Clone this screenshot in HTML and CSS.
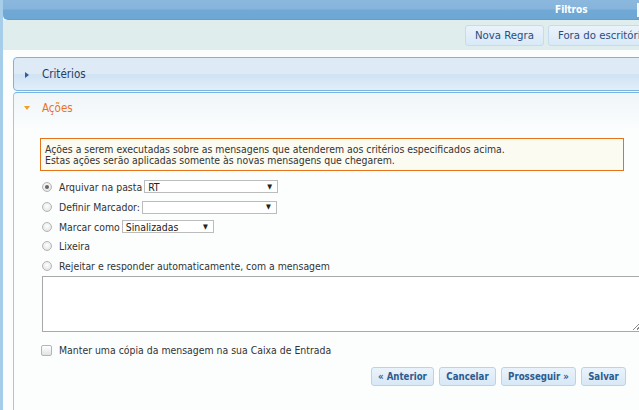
FILE: index.html
```html
<!DOCTYPE html>
<html lang="pt">
<head>
<meta charset="utf-8">
<title>Filtros</title>
<link rel="stylesheet" href="styles.css">
</head>
<body>
<div class="app">
  <div class="header">
    <span class="title">Filtros</span>
    <span class="header-stub"></span>
  </div>
  <div class="toolbar">
    <button class="tbtn">Nova Regra</button>
    <button class="tbtn">Fora do escritório</button>
  </div>
  <div class="content">
    <div class="panel criterios">
      <span class="tri tri-right"></span>
      <span class="ptitle">Critérios</span>
    </div>
    <div class="panel acoes">
      <div class="acoes-head">
        <span class="tri tri-down"></span>
        <span class="ptitle orange">Ações</span>
      </div>
      <div class="acoes-body">
        <div class="info">Ações a serem executadas sobre as mensagens que atenderem aos critérios especificados acima.<br>Estas ações serão aplicadas somente às novas mensagens que chegarem.</div>
        <div class="opts">
          <label class="opt r1"><span class="radio checked"></span><span class="lbl">Arquivar na pasta</span><span class="sel w133"><span class="val">RT</span><span class="arr">▼</span></span></label>
          <label class="opt r2"><span class="radio"></span><span class="lbl">Definir Marcador:</span><span class="sel w134"><span class="val"></span><span class="arr">▼</span></span></label>
          <label class="opt r3"><span class="radio"></span><span class="lbl">Marcar como</span><span class="sel w91"><span class="val">Sinalizadas</span><span class="arr">▼</span></span></label>
          <label class="opt r4"><span class="radio"></span><span class="lbl">Lixeira</span></label>
          <label class="opt r5"><span class="radio"></span><span class="lbl">Rejeitar e responder automaticamente, com a mensagem</span></label>
        </div>
        <div class="ta"><span class="grip"></span></div>
        <label class="chk"><span class="box"></span><span class="lbl">Manter uma cópia da mensagem na sua Caixa de Entrada</span></label>
        <div class="actions">
          <button class="abtn b-ant">« Anterior</button>
          <button class="abtn b-can">Cancelar</button>
          <button class="abtn b-pro">Prosseguir »</button>
          <button class="abtn b-sal">Salvar</button>
        </div>
      </div>
    </div>
  </div>
</div>
</body>
</html>
```
FILE: styles.css
```css
html, body {
  margin: 0;
  padding: 0;
  width: 639px;
  height: 410px;
  overflow: hidden;
  background: #fcfefe;
  font-family: "DejaVu Sans Condensed", "DejaVu Sans", sans-serif;
  font-size: 10.4px;
  color: #333;
}
.app {
  border-left: 3px solid #a6cde9;
  height: 410px;
  box-sizing: border-box;
  width: 680px;
}
.header {
  height: 20px;
  box-sizing: border-box;
  background: linear-gradient(to bottom, #8cb8de 0%, #86b4db 45%, #70a8d6 55%, #6ea6d4 100%);
  border-bottom: 1px solid #5d9fd6;
  border-bottom-left-radius: 5px;
  display: flex;
  align-items: center;
  padding-left: 552px;
}
.title {
  color: #fff;
  font-weight: bold;
  font-size: 10px;
  width: 82px;
}
.header-stub {
  width: 6px;
  height: 14px;
  background: #f4f8fc;
}
.toolbar {
  height: 30px;
  background: #e0eded;
  display: flex;
  align-items: center;
  gap: 4px;
  padding-left: 462px;
  box-sizing: border-box;
  padding-top: 1px;
}
.tbtn {
  font-family: inherit;
  font-size: 11.3px;
  color: #2b4d7e;
  height: 21px;
  padding: 0 9px;
  border: 1px solid #c5dbee;
  border-radius: 3px;
  background: linear-gradient(to bottom, #eaf3fb, #d9e9f7);
  white-space: nowrap;
}
.content {
  padding: 7px 0 0 10px;
}
.panel {
  border: 1px solid #79b4e3;
  border-radius: 4px;
  width: 680px;
  box-sizing: border-box;
}
.criterios {
  height: 34px;
  background: linear-gradient(to bottom, #deebf7 0%, #deebf7 48%, #d0e3f4 52%, #e2eef9 100%);
  display: flex;
  align-items: center;
  padding-left: 10px;
  padding-bottom: 1px;
}
.acoes {
  margin-top: 1px;
  border-color: #79b4e3 #79b4e3 #79b4e3 #a9c6dd;
  border-bottom: none;
  border-radius: 4px 4px 0 0;
  background: linear-gradient(to bottom, #f0f5f8 0px, #fcfefe 40px);
  height: 330px;
}
.acoes-head {
  height: 30px;
  display: flex;
  align-items: center;
  padding-left: 10px;
}
.tri {
  width: 0;
  height: 0;
  margin-right: 13px;
}
.tri-right {
  border-top: 3px solid transparent;
  border-bottom: 3px solid transparent;
  border-left: 4px solid #2f5e9a;
  margin-top: 3px;
  margin-left: 1px;
}
.tri-down {
  border-left: 3px solid transparent;
  border-right: 3px solid transparent;
  border-top: 4px solid #f0a028;
  margin-right: 12px;
}
.ptitle {
  font-size: 11.5px;
  color: #243e66;
}
.orange { color: #e8741d; }
.acoes-body {
  padding: 15px 0 0 26px;
}
.info {
  width: 574px;
  border: 1px solid #e4731a;
  background: #fcfbf2;
  padding: 5px 4px 4px 4px;
  line-height: 11px;
  color: #333;
}
.opts {
  margin-top: 5px;
  display: flex;
  flex-direction: column;
}
.opt {
  display: flex;
  align-items: center;
  height: 20px;
}
.r1 { height: 21px; }
.r2 { height: 20px; }
.r3 { height: 19px; }
.r4 { height: 19px; }
.r5 { height: 21px; }
.radio {
  width: 10px;
  height: 10px;
  box-sizing: border-box;
  border-radius: 50%;
  border: 1px solid #b4b4b4;
  background: radial-gradient(circle at 50% 40%, #ffffff, #dcdcdc);
  margin: 0 5px 0 2px;
  position: relative;
}
.radio.checked::after {
  content: "";
  position: absolute;
  left: 2px; top: 2px;
  width: 4px; height: 4px;
  border-radius: 50%;
  background: #666;
}
.lbl { margin-left: 2px; }
.sel {
  margin-left: 2px;
  height: 13px;
  box-sizing: border-box;
  border: 1px solid #bcbcbc;
  background: #fff;
  display: flex;
  align-items: center;
  justify-content: space-between;
  padding: 0 5px 0 3px;
  color: #222;
}
.arr { font-size: 7px; color: #222; }
.w133 { width: 134px; }
.w134 { width: 135px; }
.w91 { width: 92px; }
.ta {
  margin-top: 0px;
  margin-left: 2px;
  width: 610px;
  height: 56px;
  box-sizing: border-box;
  border: 1px solid #a8a8a8;
  background: #fff;
  position: relative;
}
.grip {
  position: absolute;
  right: 12px;
  bottom: 1px;
  width: 6px;
  height: 6px;
  background: linear-gradient(135deg, transparent 45%, #888 45%, #888 55%, transparent 55%, transparent 75%, #888 75%, #888 85%, transparent 85%);
}
.chk {
  display: flex;
  align-items: center;
  margin-top: 11px;
  height: 14px;
}
.box {
  width: 9px;
  height: 9px;
  border: 1px solid #b4b4b4;
  border-radius: 2px;
  background: linear-gradient(#fff, #e2e2e2);
  margin-left: 1px;
  margin-right: 5px;
}
.actions {
  display: flex;
  gap: 5px;
  margin-top: 10px;
  padding-left: 331px;
}
.abtn {
  font-family: inherit;
  font-size: 9.6px;
  font-weight: bold;
  color: #2e5b8e;
  height: 19px;
  padding: 0;
  border: 1px solid #b9d3ec;
  border-radius: 3px;
  background: linear-gradient(#eaf3fb, #d8e8f6);
  white-space: nowrap;
  text-align: center;
}
.b-ant { width: 63px; }
.b-can { width: 57px; }
.b-pro { width: 75px; }
.b-sal { width: 45px; }
```
